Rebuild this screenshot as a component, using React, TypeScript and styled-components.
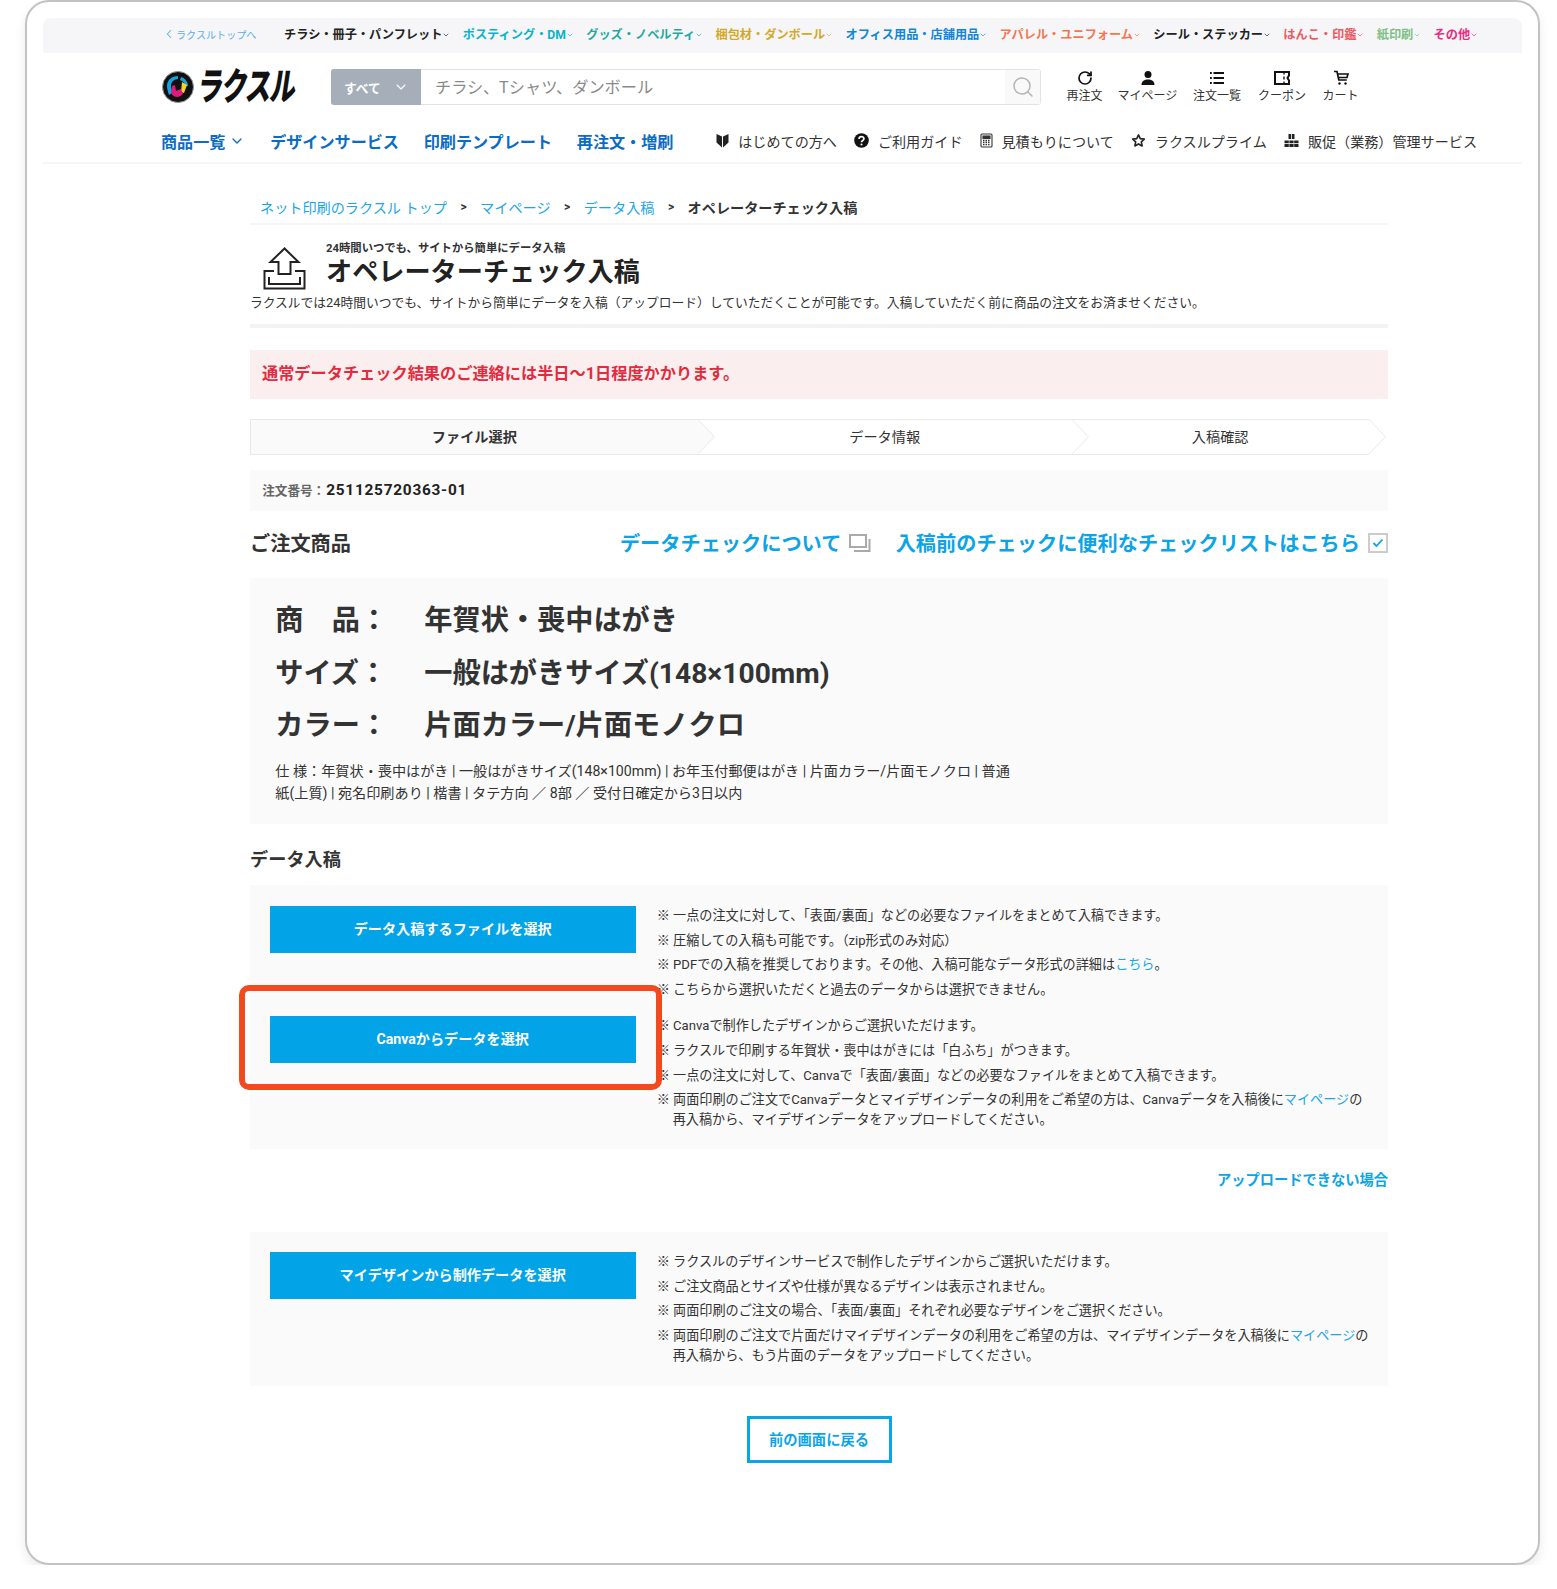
import React from "react";
import styled, { createGlobalStyle } from "styled-components";
import { ChevronDown, ChevronLeft, RotateCw, Search } from "lucide-react";

const GlobalStyle = createGlobalStyle`
  html, body {
    margin: 0;
    padding: 0;
    background: #fff;
  }
  body {
    font-family: Roboto, "Noto Sans CJK JP", "Noto Sans", sans-serif;
    color: #222;
  }
  * {
    box-sizing: border-box;
  }
`;

const topItems = [
  { label: "チラシ・冊子・パンフレット", color: "#222222" },
  { label: "ポスティング・DM", color: "#08b3cc" },
  { label: "グッズ・ノベルティ", color: "#1fa9a3" },
  { label: "梱包材・ダンボール", color: "#d3a928" },
  { label: "オフィス用品・店舗用品", color: "#0f86d9" },
  { label: "アパレル・ユニフォーム", color: "#f4764e" },
  { label: "シール・ステッカー", color: "#222222" },
  { label: "はんこ・印鑑", color: "#ee5a62" },
  { label: "紙印刷", color: "#7fc185" },
  { label: "その他", color: "#f2277f" },
];

const App = () => {
  return (
    <Frame>
      <GlobalStyle />
      <TopBar>
        <BackLink>
          <ChevronLeft size={14} strokeWidth={1.8} />
          ラクスルトップへ
        </BackLink>
        <TopItems>
          {topItems.map((item) => (
            <TopItem key={item.label} $color={item.color}>
              {item.label}
              <ChevronDown size={8} strokeWidth={2} />
            </TopItem>
          ))}
        </TopItems>
      </TopBar>

      <HeaderRow>
        <Logo>
          <LogoMark width="32" height="32" viewBox="0 0 32 32">
            <circle cx="16" cy="16" r="15.500" fill="#111" stroke="#999" strokeWidth="1" />
            <path d="M5 15c0-6 5-10 11-10v3c-4 0-7 3-7 7l1 7-3 2c-1-3-2-6-2-9z" fill="#15a5de" />
            <path d="M19 6c4 1 7 5 7 9h-3c0-3-2-5-5-6z" fill="#15a5de" />
            <path d="m20 11 5 3-3 8-3-1z" fill="#f5d51e" />
            <path d="m10 15 3-1 1 6 5-2 2 5c-4 4-9 4-12-1z" fill="#e2187f" />
          </LogoMark>
          <LogoText>ラクスル</LogoText>
        </Logo>
        <SearchBox>
          <SearchKind>
            すべて
            <ChevronDown size={16} strokeWidth={1.6} />
          </SearchKind>
          <SearchText>チラシ、Tシャツ、ダンボール</SearchText>
          <SearchButton>
            <Search size={24} strokeWidth={1.5} color="#b4b4b4" />
          </SearchButton>
        </SearchBox>
        <Shortcuts>
          <Shortcut $width={38}>
            <RotateCw size={16} strokeWidth={2.6} />
            再注文
          </Shortcut>
          <Shortcut $width={68}>
            <svg width="16" height="16" viewBox="0 0 16 16" fill="#111">
              <circle cx="8" cy="4.500" r="3.500" />
              <path d="M1.500 15c0-4 3-5.500 6.500-5.500s6.500 1.500 6.500 5.500z" />
            </svg>
            マイページ
          </Shortcut>
          <Shortcut $width={51}>
            <svg width="16" height="16" viewBox="0 0 16 16" fill="none" stroke="#111" strokeWidth="1.800">
              <path d="M4.500 3H15M4.500 8H15M4.500 13H15" />
              <path d="M1 3h1.800M1 8h1.800M1 13h1.800" />
            </svg>
            注文一覧
          </Shortcut>
          <Shortcut $width={59}>
            <svg width="18" height="16" viewBox="0 0 18 16" fill="none" stroke="#111" strokeWidth="2">
              <path d="M2 2h14v3.500l-1.500 2.500 1.500 2.500V14H2z" />
              <path d="M11 2v2.500M11 6.500v3M11 11.500V14" strokeWidth="1.400" />
            </svg>
            クーポン
          </Shortcut>
          <Shortcut $width={38}>
            <svg width="16" height="16" viewBox="0 0 16 16" fill="none" stroke="#111" strokeWidth="1.700">
              <path d="M1 1.500h3l1.800 8.500h8" />
              <path d="M4.500 4H15l-1 3.500H5.200" />
              <circle cx="6.500" cy="13.500" r="1.200" fill="#111" strokeWidth="0" />
              <circle cx="12.500" cy="13.500" r="1.200" fill="#111" strokeWidth="0" />
            </svg>
            カート
          </Shortcut>
        </Shortcuts>
      </HeaderRow>

      <NavRow>
        <NavLeft>
          <NavLink>
            商品一覧
            <ChevronDown size={16} strokeWidth={2} />
          </NavLink>
          <NavLink>デザインサービス</NavLink>
          <NavLink>印刷テンプレート</NavLink>
          <NavLink>再注文・増刷</NavLink>
        </NavLeft>
        <NavRight>
          <NavHelp>
            <svg width="13" height="15" viewBox="0 0 13 15" fill="#222">
              <path d="M6 3.500 0.500 1v8.500L6 14.500z" />
              <path d="M7 3.500 12.500 1v8.500L7 14.500z" />
            </svg>
            はじめての方へ
          </NavHelp>
          <NavHelp>
            <svg width="15" height="15" viewBox="0 0 16 16">
              <circle cx="8" cy="8" r="7.800" fill="#111" />
              <path d="M5.400 6.300c0-3.200 5.200-3.200 5.200-.2 0 1.900-2.600 1.800-2.600 3.700" fill="none" stroke="#fff" strokeWidth="1.800" />
              <circle cx="8" cy="12.300" r="1.100" fill="#fff" />
            </svg>
            ご利用ガイド
          </NavHelp>
          <NavHelp>
            <svg width="13" height="15" viewBox="0 0 13 15" fill="none" stroke="#333" strokeWidth="1.100">
              <rect x="1" y="1" width="11" height="13" rx="1" />
              <rect x="3" y="3" width="7" height="2.500" fill="#333" />
              <path d="M3 7.500h7M3 9.500h7M3 11.700h7" strokeDasharray="1.500 1" strokeWidth="1.300" />
            </svg>
            見積もりについて
          </NavHelp>
          <NavHelp>
            <svg width="15" height="15" viewBox="0 0 24 24" fill="none" stroke="#222" strokeWidth="2.600" strokeLinejoin="round">
              <path d="m12 3 2.800 6 6.500.8-4.800 4.400 1.300 6.500L12 17.500l-5.800 3.200 1.300-6.500-4.800-4.400 6.500-.8z" />
            </svg>
            ラクスルプライム
          </NavHelp>
          <NavHelp>
            <svg width="15" height="15" viewBox="0 0 15 15" fill="#222">
              <path d="M4.500 1h6v5h-6z" />
              <path d="M.5 7.500h4.300V14H.5zM5.400 7.500h4.200V14H5.400zM10.200 7.500h4.300V14h-4.300z" />
              <path d="M0 10.500h15" stroke="#fff" strokeWidth=".8" />
              <path d="M7.500 1v5" stroke="#fff" strokeWidth=".8" />
            </svg>
            販促（業務）管理サービス
          </NavHelp>
        </NavRight>
      </NavRow>

      <Main>
        <Breadcrumb>
          <CrumbLink>ネット印刷のラクスル トップ</CrumbLink>
          <CrumbSep>&gt;</CrumbSep>
          <CrumbLink>マイページ</CrumbLink>
          <CrumbSep>&gt;</CrumbSep>
          <CrumbLink>データ入稿</CrumbLink>
          <CrumbSep>&gt;</CrumbSep>
          <CrumbCurrent>オペレーターチェック入稿</CrumbCurrent>
        </Breadcrumb>

        <PageHead>
          <svg width="43" height="43" viewBox="0 0 43 43" fill="none" stroke="#222" strokeWidth="2">
            <path d="M21.500 1.500 7.500 15h8v12h12V15h8z" />
            <path d="M11 24H1.500v17.500h40V24H32" />
            <path d="M6 30v7h31v-7" />
          </svg>
          <PageHeadText>
            <PageLead>24時間いつでも、サイトから簡単にデータ入稿</PageLead>
            <PageTitle>オペレーターチェック入稿</PageTitle>
          </PageHeadText>
        </PageHead>
        <PageDesc>
          ラクスルでは24時間いつでも、サイトから簡単にデータを入稿（アップロード）していただくことが可能です。入稿していただく前に商品の注文をお済ませください。
        </PageDesc>
        <ThickRule />

        <Alert>通常データチェック結果のご連絡には半日〜1日程度かかります。</Alert>

        <Steps>
          <Step $active>
            ファイル選択
            <StepTip $active />
          </Step>
          <Step>
            データ情報
            <StepTip />
          </Step>
          <Step>
            入稿確認
            <StepTip />
          </Step>
        </Steps>

        <OrderBar>
          <OrderLabel>注文番号：</OrderLabel>
          <OrderNumber>251125720363-01</OrderNumber>
        </OrderBar>

        <SectionRow>
          <SectionTitle>ご注文商品</SectionTitle>
          <SectionLinks>
            <BigLink>
              データチェックについて
              <svg width="22" height="18" viewBox="0 0 22 18" fill="none" stroke="#aaa" strokeWidth="2">
                <rect x="1" y="1" width="16" height="12" />
                <path d="M20.500 5v12H5" />
              </svg>
            </BigLink>
            <BigLink>
              入稿前のチェックに便利なチェックリストはこちら
              <svg width="20" height="20" viewBox="0 0 20 20" fill="none">
                <rect x="1" y="1" width="18" height="18" stroke="#ccc" strokeWidth="2" />
                <path d="m5.500 10 3 3 6-6.500" stroke="#0ba4e6" strokeWidth="1.800" />
              </svg>
            </BigLink>
          </SectionLinks>
        </SectionRow>

        <ProductPanel>
          <SpecRow>
            <SpecLabel>商　品：</SpecLabel>
            <span>年賀状・喪中はがき</span>
          </SpecRow>
          <SpecRow>
            <SpecLabel>サイズ：</SpecLabel>
            <span>一般はがきサイズ(148×100mm)</span>
          </SpecRow>
          <SpecRow>
            <SpecLabel>カラー：</SpecLabel>
            <span>片面カラー/片面モノクロ</span>
          </SpecRow>
          <SpecDetail>
            仕 様：年賀状・喪中はがき | 一般はがきサイズ(148×100mm) | お年玉付郵便はがき | 片面カラー/片面モノクロ | 普通
            <br />
            紙(上質) | 宛名印刷あり | 楷書 | タテ方向 ／ 8部 ／ 受付日確定から3日以内
          </SpecDetail>
        </ProductPanel>

        <DataTitle>データ入稿</DataTitle>

        <UploadPanel>
          <UploadGroup>
            <BlueButton>データ入稿するファイルを選択</BlueButton>
            <Notes>
              <Note>※ 一点の注文に対して、「表面/裏面」などの必要なファイルをまとめて入稿できます。</Note>
              <Note>※ 圧縮しての入稿も可能です。（zip形式のみ対応）</Note>
              <Note>
                ※ PDFでの入稿を推奨しております。その他、入稿可能なデータ形式の詳細は<NoteLink>こちら</NoteLink>。
              </Note>
              <Note>※ こちらから選択いただくと過去のデータからは選択できません。</Note>
            </Notes>
          </UploadGroup>
          <UploadGroup $next>
            <BlueButton>Canvaからデータを選択</BlueButton>
            <Notes>
              <Note>※ Canvaで制作したデザインからご選択いただけます。</Note>
              <Note>※ ラクスルで印刷する年賀状・喪中はがきには「白ふち」がつきます。</Note>
              <Note>※ 一点の注文に対して、Canvaで「表面/裏面」などの必要なファイルをまとめて入稿できます。</Note>
              <Note>
                ※ 両面印刷のご注文でCanvaデータとマイデザインデータの利用をご希望の方は、Canvaデータを入稿後に<NoteLink>マイページ</NoteLink>の
                <br />
                再入稿から、マイデザインデータをアップロードしてください。
              </Note>
            </Notes>
          </UploadGroup>
          <Highlight />
        </UploadPanel>

        <HelpRow>アップロードできない場合</HelpRow>

        <DesignPanel>
          <UploadGroup>
            <BlueButton>マイデザインから制作データを選択</BlueButton>
            <Notes>
              <Note>※ ラクスルのデザインサービスで制作したデザインからご選択いただけます。</Note>
              <Note>※ ご注文商品とサイズや仕様が異なるデザインは表示されません。</Note>
              <Note>※ 両面印刷のご注文の場合、「表面/裏面」それぞれ必要なデザインをご選択ください。</Note>
              <Note>
                ※ 両面印刷のご注文で片面だけマイデザインデータの利用をご希望の方は、マイデザインデータを入稿後に<NoteLink>マイページ</NoteLink>の
                <br />
                再入稿から、もう片面のデータをアップロードしてください。
              </Note>
            </Notes>
          </UploadGroup>
        </DesignPanel>

        <BackRow>
          <BackButton>前の画面に戻る</BackButton>
        </BackRow>
      </Main>
    </Frame>
  );
};

export default App;

const Frame = styled.div`
  width: 1515px;
  height: 1565px;
  margin-left: 25px;
  padding: 16px 16px 0;
  background: #fff;
  border: 2px solid #c2c2c2;
  border-radius: 24px;
  box-shadow: 0 6px 12px rgba(0, 0, 0, 0.08);
`;

const TopBar = styled.div`
  display: flex;
  align-items: center;
  height: 35px;
  padding: 0 0 3px 119px;
  background: #f6f6f8;
  border-radius: 8px 8px 0 0;
`;

const BackLink = styled.div`
  display: flex;
  align-items: center;
  width: 122px;
  font-size: 10.100px;
  color: #5aaef0;
  white-space: nowrap;
`;

const TopItems = styled.div`
  display: flex;
  gap: 12.300px;
`;

const TopItem = styled.div<{ $color: string }>`
  display: flex;
  align-items: center;
  font-size: 12.200px;
  font-weight: 700;
  white-space: nowrap;
  color: ${(p) => p.$color};
  svg {
    margin-top: 2px;
  }
`;

const HeaderRow = styled.div`
  display: flex;
  align-items: center;
  height: 36px;
  margin-top: 16px;
  padding-left: 119px;
`;

const Logo = styled.div`
  display: flex;
  align-items: center;
  flex: none;
  width: 169px;
`;

const LogoMark = styled.svg`
  flex: none;
`;

const LogoText = styled.span`
  display: inline-block;
  flex: none;
  width: 100px;
  margin-left: 4px;
  font-size: 38px;
  line-height: 36px;
  font-weight: 900;
  letter-spacing: -2px;
  color: #111;
  white-space: nowrap;
  transform-origin: left center;
  transform: scaleX(0.68) skewX(-12deg);
`;

const SearchBox = styled.div`
  display: flex;
  align-items: stretch;
  width: 710px;
  height: 36px;
  border: 1px solid #e1e3e7;
  border-radius: 3px;
`;

const SearchKind = styled.div`
  display: flex;
  align-items: center;
  justify-content: space-between;
  width: 90px;
  padding: 0 12px 0 13px;
  margin: -1px 0 -1px -1px;
  background: #a6aeb9;
  border-radius: 3px 0 0 3px;
  font-size: 12.700px;
  font-weight: 700;
  color: #fff;
`;

const SearchText = styled.div`
  flex: 1;
  display: flex;
  align-items: center;
  padding: 0 0 2px 14px;
  font-size: 16.200px;
  color: #8a8a8a;
`;

const SearchButton = styled.div`
  display: flex;
  align-items: center;
  justify-content: center;
  width: 35px;
  background: #f9f9f9;
`;

const Shortcuts = styled.div`
  display: flex;
  gap: 10px;
  margin-left: 24.500px;
`;

const Shortcut = styled.div<{ $width: number }>`
  display: flex;
  flex-direction: column;
  align-items: center;
  width: ${(p) => p.$width}px;
  height: 36px;
  font-size: 12px;
  line-height: 17px;
  white-space: nowrap;
  color: #333;
  svg {
    flex: none;
    color: #111;
    margin-top: 1px;
    margin-bottom: 2px;
  }
`;

const NavRow = styled.div`
  display: flex;
  align-items: center;
  justify-content: space-between;
  height: 42px;
  margin-top: 17px;
  padding: 0 45px 3px 118px;
  border-bottom: 2px solid #f6f6f6;
`;

const NavLeft = styled.div`
  display: flex;
  gap: 24.800px;
`;

const NavLink = styled.div`
  display: flex;
  align-items: center;
  gap: 4px;
  font-size: 16.100px;
  font-weight: 700;
  color: #0b6cc4;
  white-space: nowrap;
`;

const NavRight = styled.div`
  display: flex;
  gap: 17px;
`;

const NavHelp = styled.div`
  display: flex;
  align-items: center;
  gap: 9px;
  font-size: 14.100px;
  color: #333;
  white-space: nowrap;
`;

const Main = styled.main`
  width: 1138px;
  margin-left: 207px;
`;

const Breadcrumb = styled.div`
  display: flex;
  align-items: center;
  height: 27px;
  margin-top: 34px;
  padding: 0 0 8px 10px;
  border-bottom: 2px solid #f6f6f6;
  font-size: 14.150px;
`;

const CrumbLink = styled.span`
  color: #1ba6e8;
`;

const CrumbSep = styled.span`
  width: 33.200px;
  text-align: center;
  font-size: 12px;
  font-weight: 700;
  color: #333;
`;

const CrumbCurrent = styled.span`
  font-weight: 700;
  color: #333;
`;

const PageHead = styled.div`
  display: flex;
  margin-top: 15px;
  padding-left: 13.400px;
  svg {
    margin-top: 6.500px;
  }
`;

const PageHeadText = styled.div`
  margin: 1px 0 0 19.600px;
`;

const PageLead = styled.div`
  font-size: 11.340px;
  line-height: 14.200px;
  font-weight: 700;
  color: #333;
`;

const PageTitle = styled.h1`
  margin: 0;
  font-size: 26.170px;
  line-height: 34.400px;
  font-weight: 700;
  color: #222;
`;

const PageDesc = styled.p`
  margin: 3.600px 0 0;
  font-size: 12.760px;
  line-height: 20px;
  color: #333;
  white-space: nowrap;
`;

const ThickRule = styled.div`
  height: 4px;
  margin-top: 11px;
  background: #f3f3f3;
`;

const Alert = styled.div`
  display: flex;
  align-items: center;
  height: 49px;
  margin-top: 21.700px;
  padding: 0 0 4px 12px;
  background: #fbeeee;
  font-size: 16.200px;
  font-weight: 700;
  color: #e22b3f;
`;

const Steps = styled.div`
  display: grid;
  grid-template-columns: 447.700px 374px 297px;
  height: 35.400px;
  margin-top: 20.300px;
`;

const Step = styled.div<{ $active?: boolean }>`
  position: relative;
  display: flex;
  align-items: center;
  justify-content: center;
  padding-bottom: 2px;
  font-size: 14.200px;
  font-weight: ${(p) => (p.$active ? 700 : 400)};
  color: #333;
  background: ${(p) => (p.$active ? "#fafafa" : "#fff")};
  border: 1px solid #e9e9e9;
  border-width: 1px 0;
  &:first-child {
    border-left-width: 1px;
  }
`;

const TipShape = styled.svg`
  position: absolute;
  top: -1px;
  left: 100%;
  z-index: 1;
`;

const StepTip = ({ $active }: { $active?: boolean }) => (
  <TipShape width="17" height="35.400" viewBox="0 0 17 35.400">
    <path d="M0 .5 16.500 17.700 0 34.900" fill={$active ? "#fafafa" : "#fff"} stroke="#e9e9e9" />
  </TipShape>
);

const OrderBar = styled.div`
  display: flex;
  align-items: center;
  height: 41px;
  margin-top: 15.300px;
  padding-left: 12.200px;
  background: #fafafa;
`;

const OrderLabel = styled.span`
  padding-bottom: 2px;
  font-size: 12.600px;
  font-weight: 700;
  color: #666;
`;

const OrderNumber = styled.span`
  margin-left: 1px;
  font-size: 15.400px;
  font-weight: 700;
  letter-spacing: 0.750px;
  color: #222;
`;

const SectionRow = styled.div`
  display: flex;
  align-items: center;
  justify-content: space-between;
  height: 32px;
  margin-top: 17px;
  padding-bottom: 2px;
`;

const SectionTitle = styled.h2`
  margin: 0;
  font-size: 20.200px;
  font-weight: 700;
  color: #333;
`;

const SectionLinks = styled.div`
  display: flex;
  gap: 24.300px;
`;

const BigLink = styled.div`
  display: flex;
  align-items: center;
  gap: 8px;
  font-size: 20.200px;
  font-weight: 700;
  color: #0ba4e6;
  white-space: nowrap;
`;

const ProductPanel = styled.section`
  height: 245.400px;
  margin-top: 18.600px;
  padding: 14px 25.300px 0;
  background: #fafafa;
`;

const SpecRow = styled.div`
  display: flex;
  height: 52.800px;
  align-items: center;
  padding-bottom: 3px;
  font-size: 28.200px;
  font-weight: 700;
  color: #333;
  white-space: nowrap;
`;

const SpecLabel = styled.span`
  width: 149px;
`;

const SpecDetail = styled.p`
  margin: 10.500px 0 0;
  font-size: 14.150px;
  line-height: 21.300px;
  color: #333;
`;

const DataTitle = styled.h2`
  height: 28px;
  margin: 21.400px 0 0;
  font-size: 18.200px;
  line-height: 30px;
  font-weight: 700;
  color: #333;
`;

const UploadPanel = styled.section`
  position: relative;
  height: 263.700px;
  margin-top: 12px;
  padding: 20.700px 0 0 19.700px;
  background: #fafafa;
`;

const UploadGroup = styled.div<{ $next?: boolean }>`
  display: flex;
  align-items: flex-start;
  margin-top: ${(p) => (p.$next ? "12px" : "0")};
`;

const BlueButton = styled.div`
  display: flex;
  flex: none;
  align-items: center;
  justify-content: center;
  width: 366px;
  height: 47px;
  padding-bottom: 3px;
  background: #03a3e8;
  font-size: 14.150px;
  font-weight: 700;
  color: #fff;
`;

const Notes = styled.ul`
  margin: 0 0 0 21px;
  padding: 0;
  list-style: none;
`;

const Note = styled.li`
  margin-bottom: 4.300px;
  padding-left: 16px;
  text-indent: -16px;
  font-size: 13.130px;
  line-height: 20.300px;
  color: #333;
  white-space: nowrap;
`;

const NoteLink = styled.span`
  color: #1ba6e8;
`;

const Highlight = styled.div`
  position: absolute;
  top: 100.200px;
  left: -10.800px;
  width: 423px;
  height: 105px;
  border: 6px solid #f4491f;
  border-radius: 10px;
  pointer-events: none;
`;

const HelpRow = styled.div`
  height: 20px;
  margin-top: 20.600px;
  text-align: right;
  font-size: 14.250px;
  line-height: 20px;
  font-weight: 700;
  color: #0ba4e6;
`;

const DesignPanel = styled.section`
  height: 154px;
  margin-top: 42.700px;
  padding: 19.700px 0 0 19.700px;
  background: #fafafa;
`;

const BackRow = styled.div`
  display: flex;
  justify-content: center;
  margin-top: 29.700px;
`;

const BackButton = styled.div`
  display: flex;
  align-items: center;
  justify-content: center;
  width: 145px;
  height: 47px;
  padding-bottom: 2px;
  border: 3px solid #0aa5e9;
  font-size: 14.300px;
  font-weight: 700;
  color: #0aa5e9;
`;
